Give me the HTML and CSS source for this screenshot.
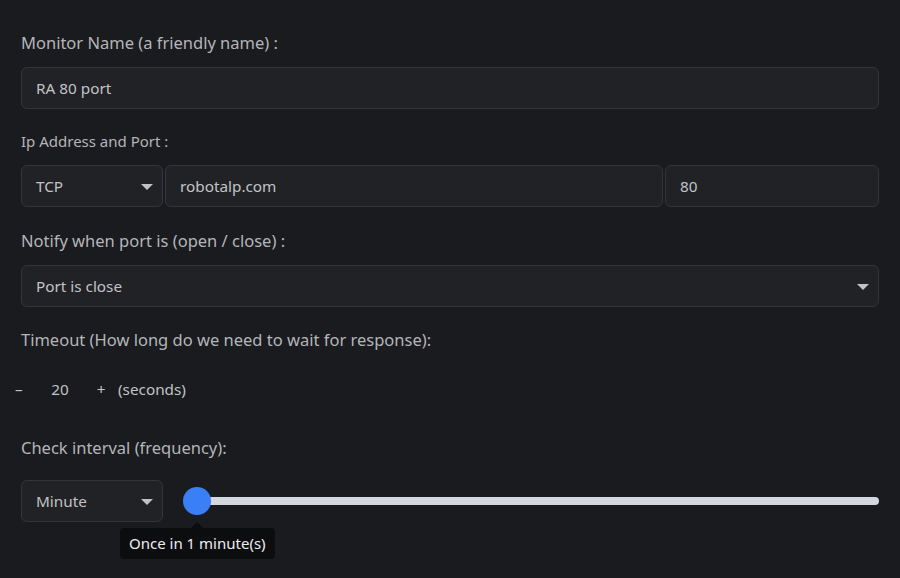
FILE: index.html
```html
<!DOCTYPE html>
<html lang="en">

<head>
    <meta charset="UTF-8">
    <meta name="viewport" content="width=device-width, initial-scale=1.0">
    <title>Edit Monitor</title>
    <link rel="stylesheet" href="styles.css">
</head>

<body>

    <form class="monitor-form">

        <!-- Monitor name -->
        <div class="field">
            <label class="field-label">Monitor Name (a friendly name) :</label>
            <div class="control">RA 80 port</div>
        </div>

        <!-- Protocol, host and port -->
        <div class="field">
            <label class="field-label small">Ip Address and Port :</label>
            <div class="address-row">
                <div class="control select protocol">TCP <span class="caret"></span></div>
                <div class="control host">robotalp.com</div>
                <div class="control port">80</div>
            </div>
        </div>

        <div class="field notify">
            <label class="field-label">Notify when port is (open / close) :</label>
            <div class="control select">Port is close <span class="caret"></span></div>
        </div>

        <div class="field timeout">
            <label class="field-label">Timeout (How long do we need to wait for response):</label>
            <div class="stepper">
                <span class="step-btn minus">&ndash;</span>
                <span class="step-value">20</span>
                <span class="step-btn plus">+</span>
                <span class="step-unit">(seconds)</span>
            </div>
        </div>

        <div class="field interval">
            <label class="field-label">Check interval (frequency):</label>
            <div class="interval-row">
                <div class="control select unit">Minute <span class="caret"></span></div>
                <div class="slider">
                    <div class="slider-track"></div>
                    <div class="slider-thumb"></div>
                    <div class="slider-tooltip">Once in 1 minute(s)</div>
                </div>
            </div>
        </div>

    </form>

</body>

</html>
```

FILE: styles.css
```css
body {
    margin: 0;
    padding: 0;
    min-height: 100vh;
    background-color: #1a1b1e;
    color: #c1c2c5;
    font-family: "Noto Sans", Arial, sans-serif;
}

.monitor-form {
    padding: 31px 21px 60px 21px;
}

.field {
    margin-bottom: 20px;
}

.field-label {
    display: block;
    font-size: 16.5px;
    line-height: 24px;
    color: #b4b5b9;
    margin-bottom: 12px;
}

.field-label.small {
    font-size: 15px;
}

/* inputs and selects */
.control {
    position: relative;
    box-sizing: border-box;
    height: 42px;
    display: flex;
    align-items: center;
    padding: 0 14px;
    font-size: 15.3px;
    color: #c1c2c5;
    background-color: #212226;
    border: 1px solid #34353a;
    border-radius: 6px;
}

.caret {
    position: absolute;
    right: 9px;
    top: 18px;
    width: 0;
    height: 0;
    border-left: 6px solid transparent;
    border-right: 6px solid transparent;
    border-top: 6px solid #c1c2c5;
}

.address-row {
    display: flex;
    gap: 2px;
}

.protocol {
    width: 142px;
    flex: none;
}

.host {
    flex: 1;
}

.port {
    width: 214px;
    flex: none;
}

.notify {
    padding-top: 2px;
}

.timeout {
    padding-top: 1px;
}

/* timeout stepper */
.stepper {
    display: flex;
    align-items: center;
    height: 34px;
    margin-left: -6px;
    margin-top: 20px;
    font-size: 15.3px;
}

.step-btn {
    text-align: center;
}

.minus {
    width: 7px;
}

.step-value {
    width: 40px;
    margin-left: 18px;
    text-align: center;
}

.plus {
    width: 10px;
    margin-left: 16px;
}

.step-unit {
    margin-left: 12px;
}

.interval {
    margin-top: 30px;
}

.interval .field-label {
    margin-bottom: 20px;
}

.interval-row {
    display: flex;
    align-items: center;
    gap: 20px;
}

.unit {
    width: 142px;
    flex: none;
}

.slider {
    position: relative;
    flex: 1;
    height: 28px;
    display: flex;
    align-items: center;
}

.slider-track {
    flex: 1;
    height: 8px;
    margin-left: 6px;
    background-color: #d3d8de;
    border-radius: 4px;
}

.slider-thumb {
    position: absolute;
    left: 0;
    top: 0;
    width: 28px;
    height: 28px;
    border-radius: 50%;
    background-color: #3b7ff6;
}

.slider-tooltip {
    position: absolute;
    left: -63px;
    top: 41px;
    white-space: nowrap;
    padding: 5px 9px;
    font-size: 15px;
    line-height: 21px;
    color: #eceef0;
    background-color: #0c0d0f;
    border-radius: 4px;
}

.slider-tooltip::before {
    content: "";
    position: absolute;
    left: 71px;
    top: -6px;
    border-left: 6px solid transparent;
    border-right: 6px solid transparent;
    border-bottom: 6px solid #0c0d0f;
}
```
